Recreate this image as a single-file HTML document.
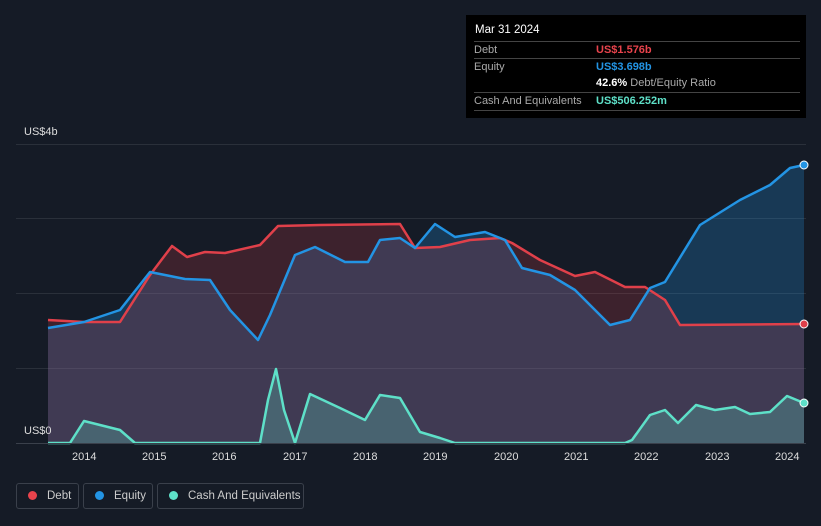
<!DOCTYPE html>
<html><head><style>
body{margin:0;width:821px;height:526px;background:#151b26;font-family:"Liberation Sans",sans-serif;overflow:hidden;position:relative}
.tt{position:absolute;left:466px;top:15px;width:340px;height:103px;background:#000;color:#fff;font-size:11px}
.r{position:absolute;left:8px;right:6px;border-top:1px solid #444;height:17px;line-height:17px;color:#aaa}
.r span{position:absolute;left:122px}
.leg{position:absolute;top:483px;height:26px;border:1px solid #3a404b;border-radius:3px;color:#ccc;font-size:11.5px;line-height:24px;box-sizing:border-box;white-space:nowrap}
.leg i{display:inline-block;width:9px;height:9px;border-radius:50%;margin:0 10px 0 11px;vertical-align:-1px}
.ax{position:absolute;color:#ddd;font-size:11px}
</style></head><body>
<svg width="821" height="526" style="position:absolute;left:0;top:0">
<g stroke="#2a303a" stroke-width="1">
<line x1="16" y1="144.5" x2="806" y2="144.5"/><line x1="16" y1="218.5" x2="806" y2="218.5"/><line x1="16" y1="293.5" x2="806" y2="293.5"/><line x1="16" y1="368.5" x2="806" y2="368.5"/></g>
<path d="M48,328 L84,322 120,310 150,272 185,279 210,280 230,310 258,340 270,315 295,255 315,247 345,262 368,262 380,240 400,238 415,248 435,224 455,237 485,232 505,240 522,268 550,275 575,290 610,325 630,320 650,288 665,282 700,225 740,200 770,185 790,168 804,165 L804,443 48,443Z" fill="#2394e4" fill-opacity="0.25"/>
<path d="M48,320 L84,322 120,322 150,275 172,246 187,257 205,252 225,253 260,245 278,226 320,225 400,224 415,248 440,247 470,240 500,238 512,243 540,260 575,276 595,272 625,287 645,287 665,300 680,325 804,324 L804,443 48,443Z" fill="#e0404a" fill-opacity="0.2"/>
<path d="M48,443 L70,443 84,421 120,430 135,443 260,443 268,400 276,369 284,410 295,443 310,394 340,408 365,420 380,395 400,398 420,432 440,438 455,443 625,443 632,440 650,415 665,410 678,423 696,405 715,410 735,407 750,414 770,412 787,396 804,403 L804,443Z" fill="#5ee0c8" fill-opacity="0.25"/>
<path d="M48,320 L84,322 120,322 150,275 172,246 187,257 205,252 225,253 260,245 278,226 320,225 400,224 415,248 440,247 470,240 500,238 512,243 540,260 575,276 595,272 625,287 645,287 665,300 680,325 804,324" fill="none" stroke="#e0404a" stroke-width="2.5" stroke-linejoin="round"/>
<path d="M48,328 L84,322 120,310 150,272 185,279 210,280 230,310 258,340 270,315 295,255 315,247 345,262 368,262 380,240 400,238 415,248 435,224 455,237 485,232 505,240 522,268 550,275 575,290 610,325 630,320 650,288 665,282 700,225 740,200 770,185 790,168 804,165" fill="none" stroke="#2394e4" stroke-width="2.5" stroke-linejoin="round"/>
<path d="M48,443 L70,443 84,421 120,430 135,443 260,443 268,400 276,369 284,410 295,443 310,394 340,408 365,420 380,395 400,398 420,432 440,438 455,443 625,443 632,440 650,415 665,410 678,423 696,405 715,410 735,407 750,414 770,412 787,396 804,403" fill="none" stroke="#5ee0c8" stroke-width="2.5" stroke-linejoin="round"/>
<line x1="16" y1="443.5" x2="806" y2="443.5" stroke="#3a404b"/>
<circle cx="804" cy="165" r="4" fill="#2394e4" stroke="#fff" stroke-width="1"/>
<circle cx="804" cy="324" r="4" fill="#e0404a" stroke="#fff" stroke-width="1"/>
<circle cx="804" cy="403" r="4" fill="#5ee0c8" stroke="#fff" stroke-width="1"/>
</svg>
<div class="ax" style="left:24px;top:126px">US$4b</div>
<div class="ax" style="left:24px;top:425px">US$0</div>
<div class="ax" style="left:72px;top:451px">2014</div><div class="ax" style="left:142px;top:451px">2015</div><div class="ax" style="left:212px;top:451px">2016</div><div class="ax" style="left:283px;top:451px">2017</div><div class="ax" style="left:353px;top:451px">2018</div><div class="ax" style="left:423px;top:451px">2019</div><div class="ax" style="left:494px;top:451px">2020</div><div class="ax" style="left:564px;top:451px">2021</div><div class="ax" style="left:634px;top:451px">2022</div><div class="ax" style="left:705px;top:451px">2023</div><div class="ax" style="left:775px;top:451px">2024</div>
<div class="tt">
<div style="position:absolute;left:9px;top:9px;font-size:11.5px">Mar 31 2024</div>
<div class="r" style="top:26px">Debt<span style="color:#e8434c;font-weight:bold">US$1.576b</span></div>
<div class="r" style="top:43px">Equity<span style="color:#2394e4;font-weight:bold">US$3.698b</span></div>
<div class="r" style="top:60px;border:0"><span><b style="color:#fff">42.6%</b> Debt/Equity Ratio</span></div>
<div class="r" style="top:77px">Cash And Equivalents<span style="color:#5ee0c8;font-weight:bold">US$506.252m</span></div>
<div class="r" style="top:95px;height:0"></div>
</div>
<div class="leg" style="left:16px;width:63px"><i style="background:#e8434c"></i>Debt</div>
<div class="leg" style="left:83px;width:70px"><i style="background:#2394e4"></i>Equity</div>
<div class="leg" style="left:157px;width:147px"><i style="background:#5ee0c8"></i>Cash And Equivalents</div>
</body></html>
